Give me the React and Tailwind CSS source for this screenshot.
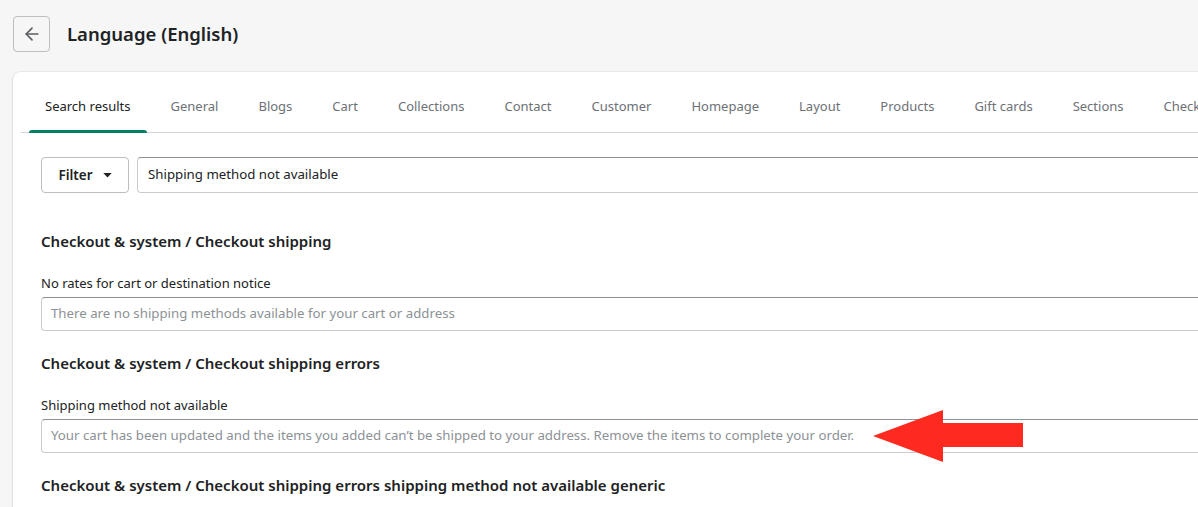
import { ArrowLeft } from 'lucide-react';

const tabs = [
  'Search results',
  'General',
  'Blogs',
  'Cart',
  'Collections',
  'Contact',
  'Customer',
  'Homepage',
  'Layout',
  'Products',
  'Gift cards',
  'Sections',
  'Checkout',
];

function Field({ label, placeholder }) {
  return (
    <div className="mt-[22px]">
      <div className="text-[13px] leading-5 text-[#202223]">{label}</div>
      <div className="mt-1 flex h-[34px] items-center rounded-l-[4px] border border-[#c9cccf] border-t-[#8c9196] pl-[9px] text-[13.25px] text-[#8c9196]">
        {placeholder}
      </div>
    </div>
  );
}

function Section({ title, children }) {
  return (
    <div className="mt-[22px] first:mt-[38px]">
      <h2 className="text-[15px] font-semibold leading-5 text-[#202223]">{title}</h2>
      {children}
    </div>
  );
}

export default function App() {
  return (
    <div
      className="h-[507px] overflow-hidden bg-[#f6f6f7] pt-4 pl-[13px]"
      style={{ fontFamily: '"Noto Sans", "Open Sans", sans-serif' }}
    >
      {/* Header */}
      <div className="flex items-center gap-[17px]">
        <button className="flex h-[36px] w-[37px] items-center justify-center rounded-[4px] border border-[#babfc3] bg-[#f6f6f7] text-[#5c5f62]">
          <ArrowLeft className="h-5 w-5" strokeWidth={2} />
        </button>
        <h1 className="text-[18.5px] font-semibold text-[#202223]">Language (English)</h1>
      </div>

      {/* Card */}
      <div className="relative mt-5 w-[1260px] rounded-tl-[8px] bg-white pb-12 pl-2 pt-[9px] shadow-[0_0_0_1px_rgba(63,63,68,0.05),0_1px_3px_0_rgba(63,63,68,0.15)]">
        <nav className="flex gap-2 border-b border-[#d2d5d8] pl-2">
          {tabs.map((t, i) => (
            <div
              key={t}
              className={`relative flex h-[51px] shrink-0 items-center px-4 text-[13px] ${
                i === 0 ? 'text-[#202223]' : 'text-[#6d7175]'
              }`}
            >
              {t}
              {i === 0 && (
                <span className="absolute bottom-[-1px] left-0 right-0 h-[3px] rounded-t-[3px] bg-[#008060]" />
              )}
            </div>
          ))}
        </nav>

        <div className="pl-5 pt-6">
          <div className="flex gap-2">
            <button className="flex h-[36px] w-[88px] items-center justify-center gap-[10px] rounded-[4px] border border-[#babfc3] bg-white text-[13.5px] font-semibold text-[#202223]">
              Filter
              <svg viewBox="0 0 10 6" className="h-[5px] w-[9px]" fill="#202223">
                <path d="M0 0 L10 0 L5 5.5 Z" />
              </svg>
            </button>
            <div className="flex h-[36px] flex-1 items-center rounded-l-[4px] border border-[#c9cccf] border-t-[#8c9196] pl-[10px] text-[13.25px] text-[#202223]">
              Shipping method not available
            </div>
          </div>

          <div>
            <Section title="Checkout & system / Checkout shipping">
              <Field
                label="No rates for cart or destination notice"
                placeholder="There are no shipping methods available for your cart or address"
              />
            </Section>
            <Section title="Checkout & system / Checkout shipping errors">
              <Field
                label="Shipping method not available"
                placeholder="Your cart has been updated and the items you added can’t be shipped to your address. Remove the items to complete your order."
              />
            </Section>
            <Section title="Checkout & system / Checkout shipping errors shipping method not available generic" />
          </div>
        </div>

        {/* Annotation arrow */}
        <svg
          className="absolute left-[860px] top-[338px] h-[52px] w-[152px]"
          viewBox="0 0 152 52"
        >
          <polygon points="0,26 70,0 70,13 150,13 150,37 70,37 70,52" fill="#ff2a1f" />
        </svg>
      </div>
    </div>
  );
}
